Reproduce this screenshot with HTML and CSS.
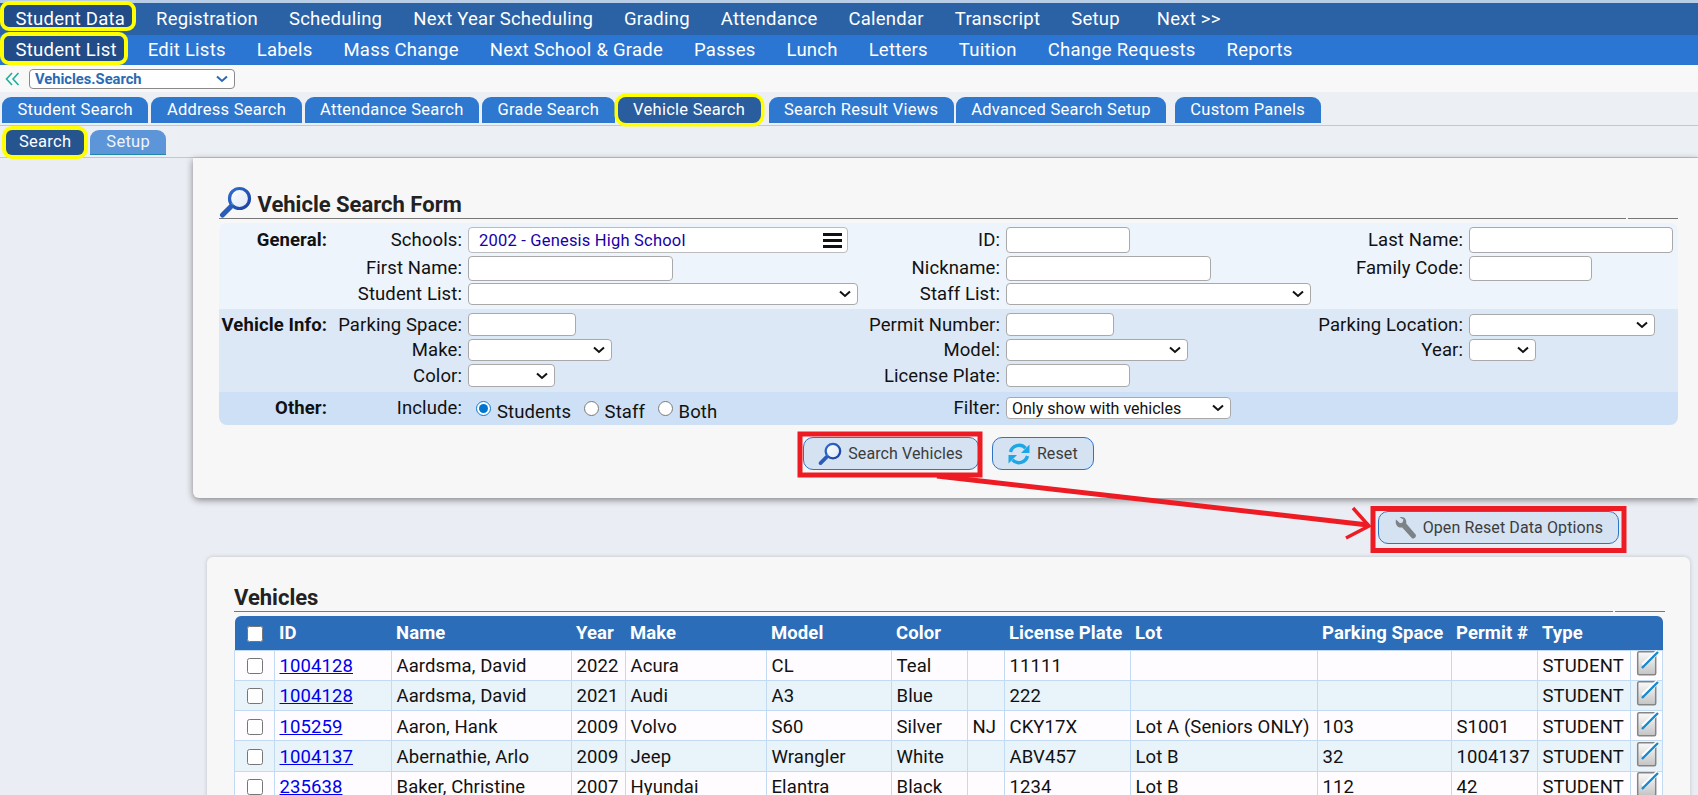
FILE: index.html
```html
<!DOCTYPE html>
<html lang="en">
<head>
<meta charset="utf-8">
<title>Vehicle Search</title>
<link rel="stylesheet" href="styles.css">
</head>
<body>
<svg class="defs" width="0" height="0" aria-hidden="true">
  <defs>
    <linearGradient id="lens" x1="0" y1="0" x2="1" y2="1"><stop offset="0" stop-color="#ffffff"/><stop offset="1" stop-color="#dbe6f5"/></linearGradient>
    <linearGradient id="ring" x1="0" y1="0" x2="1" y2="1"><stop offset="0" stop-color="#2f6fd0"/><stop offset="1" stop-color="#1a3fa0"/></linearGradient>
    <linearGradient id="page" x1="0" y1="0" x2="0" y2="1"><stop offset="0" stop-color="#fbfbfb"/><stop offset="1" stop-color="#c4c4c4"/></linearGradient>
    <symbol id="mag" viewBox="0 0 33 33">
      <circle cx="20.5" cy="12.5" r="10" fill="url(#lens)" stroke="url(#ring)" stroke-width="3.2"/>
      <path d="M13.6 20 L11.6 18" stroke="#37b5dc" stroke-width="4"/>
      <path d="M12 20.5 L3.5 29" stroke="#2a5cb8" stroke-width="5" stroke-linecap="round"/>
    </symbol>
    <symbol id="edit" viewBox="0 0 24 26">
      <rect x="2.700" y="1.700" width="18" height="23" rx="1.500" fill="url(#page)" stroke="#858585" stroke-width="1.500"/>
      <path d="M8 15.500 L23 1.500" stroke="#ffffff" stroke-width="4.500"/>
      <path d="M7 18 L23 2" stroke="#1689cf" stroke-width="2.400"/>
    </symbol>
  </defs>
</svg>

<nav class="nav nav-main">
  <a class="nav-item is-active">Student Data</a>
  <a class="nav-item">Registration</a>
  <a class="nav-item">Scheduling</a>
  <a class="nav-item">Next Year Scheduling</a>
  <a class="nav-item">Grading</a>
  <a class="nav-item">Attendance</a>
  <a class="nav-item">Calendar</a>
  <a class="nav-item">Transcript</a>
  <a class="nav-item">Setup</a>
  <a class="nav-item nav-next">Next &gt;&gt;</a>
</nav>
<nav class="nav nav-sub">
  <a class="nav-item is-active">Student List</a>
  <a class="nav-item">Edit Lists</a>
  <a class="nav-item">Labels</a>
  <a class="nav-item">Mass Change</a>
  <a class="nav-item">Next School &amp; Grade</a>
  <a class="nav-item">Passes</a>
  <a class="nav-item">Lunch</a>
  <a class="nav-item">Letters</a>
  <a class="nav-item">Tuition</a>
  <a class="nav-item">Change Requests</a>
  <a class="nav-item">Reports</a>
</nav>

<div class="screen-bar">
  <svg class="collapse" width="15" height="14" viewBox="0 0 15 14"><path d="M7 1 L1.5 7 L7 13 M13.5 1 L8 7 L13.5 13" fill="none" stroke="#1fae9c" stroke-width="1.6"/></svg>
  <select class="screen-select"><option>Vehicles.Search</option></select>
</div>

<div class="tabs">
  <a class="tab">Student Search</a>
  <a class="tab">Address Search</a>
  <a class="tab">Attendance Search</a>
  <a class="tab">Grade Search</a>
  <a class="tab is-active">Vehicle Search</a>
  <a class="tab">Search Result Views</a>
  <a class="tab tab-tight">Advanced Search Setup</a>
  <a class="tab tab-last">Custom Panels</a>
</div>
<div class="subtabs">
  <a class="subtab is-active">Search</a>
  <a class="subtab">Setup</a>
</div>

<main class="content">
  <section class="panel panel-form">
    <h2 class="heading heading-form">
      <svg class="heading-icon"><use href="#mag"/></svg>
      <span>Vehicle Search Form</span>
    </h2>
    <form class="form">
      <div class="band band-general">
        <div class="group">General:</div>
        <label class="lbl">Schools:</label>
        <div class="multi"><span class="multi-text">2002 - Genesis High School</span><span class="burger"><i></i><i></i><i></i></span></div>
        <label class="lbl">ID:</label>
        <input class="f w124" type="text">
        <label class="lbl">Last Name:</label>
        <input class="f w204" type="text">

        <div></div>
        <label class="lbl">First Name:</label>
        <input class="f w205" type="text">
        <label class="lbl">Nickname:</label>
        <input class="f w205" type="text">
        <label class="lbl">Family Code:</label>
        <input class="f w123" type="text">

        <div></div>
        <label class="lbl">Student List:</label>
        <select class="f w390"></select>
        <label class="lbl">Staff List:</label>
        <select class="f w305"></select>
      </div>
      <div class="band band-vehicle">
        <div class="group">Vehicle Info:</div>
        <label class="lbl">Parking Space:</label>
        <input class="f w108" type="text">
        <label class="lbl">Permit Number:</label>
        <input class="f w108" type="text">
        <label class="lbl">Parking Location:</label>
        <select class="f w186 f-low"></select>

        <div></div>
        <label class="lbl">Make:</label>
        <select class="f w144"></select>
        <label class="lbl">Model:</label>
        <select class="f w182"></select>
        <label class="lbl">Year:</label>
        <select class="f w67"></select>

        <div></div>
        <label class="lbl">Color:</label>
        <select class="f w87"></select>
        <label class="lbl">License Plate:</label>
        <input class="f w124" type="text">
      </div>
      <div class="band band-other">
        <div class="group">Other:</div>
        <label class="lbl">Include:</label>
        <div class="radios">
          <input class="radio" type="radio" name="inc" checked><span class="radio-text">Students</span>
          <input class="radio" type="radio" name="inc"><span class="radio-text">Staff</span>
          <input class="radio" type="radio" name="inc"><span class="radio-text">Both</span>
        </div>
        <label class="lbl">Filter:</label>
        <select class="f w225 f-text"><option>Only show with vehicles</option></select>
      </div>
    </form>
    <div class="actions">
      <button class="btn" type="button"><svg class="btn-icon"><use href="#mag"/></svg>Search Vehicles</button>
      <button class="btn" type="button">
        <svg class="btn-icon" viewBox="0 0 24 24"><path d="M3.5 10 A8.8 8.8 0 0 1 18.5 6.2" fill="none" stroke="#1fa6e4" stroke-width="3.4"/><path d="M22.5 2.5 V11 H14z" fill="#1fa6e4"/><path d="M20.5 14 A8.8 8.8 0 0 1 5.5 17.8" fill="none" stroke="#1fa6e4" stroke-width="3.4"/><path d="M1.5 21.5 V13 H10z" fill="#1fa6e4"/></svg>
        Reset
      </button>
    </div>
  </section>

  <div class="reset-row">
    <button class="btn" type="button">
      <svg class="btn-icon" viewBox="0 0 24 24"><path d="M3 3.5 L7 7.2 L9.6 6.4 L10.4 3.6 L6.6 1.2 C11 0 14 3.2 13.2 7.4 L22.6 18.6 C24 20.4 21 23.8 19 22.2 L9.2 11.4 C5 12.4 1.6 8.6 3 3.5z" fill="#7d8287"/></svg>
      Open Reset Data Options
    </button>
  </div>

  <section class="panel panel-table">
    <h2 class="heading heading-table"><span>Vehicles</span></h2>
    <table class="grid">
      <colgroup>
        <col class="c-check"><col class="c-id"><col class="c-name"><col class="c-year"><col class="c-make"><col class="c-model"><col class="c-color"><col class="c-state"><col class="c-plate"><col class="c-lot"><col class="c-space"><col class="c-permit"><col class="c-type"><col class="c-edit">
      </colgroup>
      <thead>
        <tr><th class="cc"><input class="check" type="checkbox"></th><th>ID</th><th>Name</th><th>Year</th><th>Make</th><th>Model</th><th>Color</th><th></th><th>License Plate</th><th>Lot</th><th>Parking Space</th><th>Permit #</th><th>Type</th><th></th></tr>
      </thead>
      <tbody>
        <tr><td class="cc"><input class="check" type="checkbox"></td><td><a href="#">1004128</a></td><td>Aardsma, David</td><td>2022</td><td>Acura</td><td>CL</td><td>Teal</td><td></td><td>11111</td><td></td><td></td><td></td><td>STUDENT</td><td class="cc"><svg class="edit"><use href="#edit"/></svg></td></tr>
        <tr><td class="cc"><input class="check" type="checkbox"></td><td><a href="#">1004128</a></td><td>Aardsma, David</td><td>2021</td><td>Audi</td><td>A3</td><td>Blue</td><td></td><td>222</td><td></td><td></td><td></td><td>STUDENT</td><td class="cc"><svg class="edit"><use href="#edit"/></svg></td></tr>
        <tr><td class="cc"><input class="check" type="checkbox"></td><td><a href="#">105259</a></td><td>Aaron, Hank</td><td>2009</td><td>Volvo</td><td>S60</td><td>Silver</td><td>NJ</td><td>CKY17X</td><td>Lot A (Seniors ONLY)</td><td>103</td><td>S1001</td><td>STUDENT</td><td class="cc"><svg class="edit"><use href="#edit"/></svg></td></tr>
        <tr><td class="cc"><input class="check" type="checkbox"></td><td><a href="#">1004137</a></td><td>Abernathie, Arlo</td><td>2009</td><td>Jeep</td><td>Wrangler</td><td>White</td><td></td><td>ABV457</td><td>Lot B</td><td>32</td><td>1004137</td><td>STUDENT</td><td class="cc"><svg class="edit"><use href="#edit"/></svg></td></tr>
        <tr><td class="cc"><input class="check" type="checkbox"></td><td><a href="#">235638</a></td><td>Baker, Christine</td><td>2007</td><td>Hyundai</td><td>Elantra</td><td>Black</td><td></td><td>1234</td><td>Lot B</td><td>112</td><td>42</td><td>STUDENT</td><td class="cc"><svg class="edit"><use href="#edit"/></svg></td></tr>
      </tbody>
    </table>
  </section>
</main>

<svg class="annotations" viewBox="0 0 1698 795" aria-hidden="true">
  <rect x="800" y="434" width="180" height="41" fill="none" stroke="#ed1c24" stroke-width="5"/>
  <rect x="1373" y="508.500" width="251" height="42" fill="none" stroke="#ed1c24" stroke-width="5"/>
  <path d="M937 476 L1368 525" fill="none" stroke="#ed1c24" stroke-width="5"/>
  <path d="M1353 508 L1369 526 L1346 538" fill="none" stroke="#ed1c24" stroke-width="3.500"/>
</svg>
</body>
</html>
```

FILE: styles.css
```css
* { box-sizing: border-box; }
html, body { height: 100%; overflow: hidden; }
body {
  margin: 0;
  position: relative;
  background: #eaedf3;
  color: #111;
  font-family: Roboto, "Liberation Sans", sans-serif;
  font-size: 16px;
}
.defs { position: absolute; }

.nav { display: flex; align-items: center; isolation: isolate; }
.nav-main { height: 35px; border-top: 3px solid #b7cde8; background: #2a62a5; }
.nav-sub { height: 30px; background: #2b76d2; }
.nav-item {
  position: relative;
  padding: 0 15.500px;
  color: #fff;
  font-size: 18.500px;
  letter-spacing: .24px;
  line-height: 30px;
  white-space: nowrap;
}
.nav-next { margin-left: 6px; }
.nav-item.is-active::before {
  content: "";
  position: absolute;
  z-index: -1;
  inset: -3px 4px 0 0;
  border: 4px solid #ffff00;
  border-radius: 9px;
  background: #214c88;
}
.nav-main .nav-item.is-active::before { right: 5px; bottom: 3px; }

.screen-bar {
  display: flex;
  align-items: center;
  gap: 9px;
  height: 27px;
  padding-left: 5px;
  background: #f8f8f8;
}
.screen-select {
  appearance: none;
  width: 206px;
  height: 20px;
  padding: 0 0 0 5px;
  border: 1px solid #8a8a8a;
  border-radius: 4px;
  background: #fff url("data:image/svg+xml,%3Csvg xmlns='http://www.w3.org/2000/svg' width='12' height='8'%3E%3Cpath d='M1 1.500l5 4.500 5-4.500' fill='none' stroke='%232a6ab5' stroke-width='2'/%3E%3C/svg%3E") no-repeat right 6px center;
  color: #2a6ab5;
  font: 700 14.700px Roboto, sans-serif;
}

.tabs {
  display: flex;
  gap: 3px;
  height: 34px;
  padding: 5px 0 0 2px;
  border-bottom: 1px solid #c4c8cc;
  background: #eceff4;
}
.tab {
  height: 26px;
  padding: 0 15.500px;
  border-radius: 9px 9px 0 0;
  background: #2f78d0;
  color: #fff;
  font-size: 16.500px;
  letter-spacing: .27px;
  line-height: 26px;
  white-space: nowrap;
}
.tab.is-active {
  margin: 0 5px 0 0;
  border-radius: 8px;
  background: #2a5d9e;
  box-shadow: 0 0 0 3.500px #ffff00;
}
.tab-tight { margin-left: -1px; }
.tab-last { margin-left: 5.500px; }

.subtabs {
  display: flex;
  gap: 6px;
  height: 32px;
  padding: 4px 0 0 6px;
  border-bottom: 1px solid #c4c8cc;
  background: #eceff4;
}
.subtab {
  height: 25px;
  padding: 0 16px;
  border-radius: 9px 9px 0 0;
  border-bottom: 1px solid #1d87ad;
  background: #5c96d8;
  color: #eef4fb;
  font-size: 16.500px;
  letter-spacing: .27px;
  line-height: 24px;
}
.subtab.is-active {
  padding: 0 13px;
  border: 0;
  border-radius: 6px;
  background: #25548f;
  color: #fff;
  box-shadow: 0 0 0 4px #ffff00;
}

.panel { background: #f7f7f7; }
.panel-form {
  height: 340px;
  margin-left: 193px;
  padding: 32px 20px 0 26px;
  border-radius: 0 0 0 6px;
  box-shadow: 0 2px 7px rgba(0, 0, 0, .45);
}
.heading {
  display: flex;
  align-items: flex-end;
  margin: 0;
  border-bottom: 1px solid #777;
  color: #222;
  font-weight: 700;
}
.heading-form { height: 29px; font-size: 22px; line-height: 27px; position: relative; }
.heading-icon { width: 33px; height: 33px; margin: 0 5.500px -1px 0; flex: none; }
.heading::after {
  content: "";
  position: absolute;
  right: 50px;
  bottom: -1px;
  width: 2px;
  height: 1px;
  background: #f7f7f7;
}
.heading-table { position: relative; height: 28px; margin-left: 27px; margin-right: 25px; font-size: 22px; line-height: 27px; }

.form { margin-top: 4px; border-radius: 0 0 8px 8px; }
.band {
  display: grid;
  grid-template-columns: 108px 141px 392px 146px 305px 158px 1fr;
  align-items: center;
}
.band-general { padding: 4px 0; row-gap: 2.500px; grid-template-rows: 26px 25px 22px; background: #edf4fc; border-radius: 8px 8px 0 0; }
.band-vehicle { padding: 4px 0 5px; row-gap: 3px; grid-template-rows: 23px 22px 23px; background: #dde8f6; }
.band-other { padding: 5px 0 6px; grid-template-rows: 22px; background: #cee0f5; border-radius: 0 0 8px 8px; }
.group { font-weight: 700; font-size: 18.500px; letter-spacing: .1px; text-align: right; white-space: nowrap; }
.lbl { padding-right: 6px; font-size: 18.500px; letter-spacing: .1px; line-height: 22px; text-align: right; white-space: nowrap; }
.f {
  display: block;
  height: 100%;
  padding: 0 2px;
  border: 1px solid #a9a9a9;
  border-radius: 4px;
  background-color: #fff;
}
select.f {
  appearance: none;
  background: #fff url("data:image/svg+xml,%3Csvg xmlns='http://www.w3.org/2000/svg' width='12' height='8'%3E%3Cpath d='M1 1.500l5 4.500 5-4.500' fill='none' stroke='%23111' stroke-width='2'/%3E%3C/svg%3E") no-repeat right 6px center;
}
.f-low { height: 22px; margin-top: 1px; }
select.f-text { padding-left: 5px; color: #111; font: 16px Roboto, sans-serif; }
.w67 { width: 67px; } .w87 { width: 87px; } .w108 { width: 108px; }
.w123 { width: 123px; } .w124 { width: 124px; } .w144 { width: 144px; }
.w182 { width: 182px; } .w186 { width: 186px; } .w204 { width: 204px; } .w205 { width: 205px; }
.w225 { width: 225px; } .w305 { width: 305px; } .w390 { width: 390px; }

.multi {
  display: flex;
  align-items: center;
  justify-content: space-between;
  width: 380px;
  height: 100%;
  padding: 0 5px 0 10px;
  border: 1px solid #bbb;
  border-radius: 4px;
  background: #fff;
}
.multi-text { color: #1a00a8; font-size: 16.500px; letter-spacing: .2px; }
.burger { display: flex; flex-direction: column; gap: 3px; width: 19px; }
.burger i { display: block; height: 3px; background: #111; }

.radios { display: flex; align-items: center; font-size: 18.500px; letter-spacing: .1px; }
.radio { width: 15px; height: 15px; margin: 0 6px 0 8px; accent-color: #0075d0; }
.radio-text { position: relative; top: 4px; margin-right: 4.500px; }

.actions { display: flex; justify-content: center; gap: 13px; margin-top: 12px; }
.btn {
  display: flex;
  align-items: center;
  gap: 6px;
  height: 33px;
  padding: 0 15px 0 14px;
  border: 1px solid #2f74c4;
  border-radius: 10px;
  background: #d4e2f2;
  color: #3c3c3c;
  font: 16px Roboto, sans-serif;
  letter-spacing: .1px;
}
.btn-icon { width: 24px; height: 24px; flex: none; }

.reset-row { display: flex; justify-content: flex-end; height: 59px; padding: 13px 79px 0 0; }
.panel-table {
  height: 260px;
  margin: 0 8px 0 207px;
  padding-top: 27px;
  border-radius: 6px 6px 0 0;
  box-shadow: 0 0 4px rgba(0, 0, 0, .18);
}
.grid { width: 1428px; margin: 4px 0 0 27px; border-collapse: collapse; table-layout: fixed; font-size: 18.500px; letter-spacing: .1px; }
.c-check { width: 40px; } .c-id { width: 117px; } .c-name { width: 180px; } .c-year { width: 54px; }
.c-make { width: 141px; } .c-model { width: 125px; } .c-color { width: 76px; } .c-state { width: 37px; }
.c-plate { width: 126px; } .c-lot { width: 187px; } .c-space { width: 134px; } .c-permit { width: 86px; }
.c-type { width: 93px; } .c-edit { width: 32px; }
.grid th {
  height: 34px;
  padding: 0 4.500px;
  background: #2c6dba;
  color: #fff;
  font-weight: 700;
  text-align: left;
  white-space: nowrap;
}
.grid th:first-child { border-radius: 6px 0 0 0; }
.grid th:last-child { border-radius: 0 6px 0 0; }
.grid td {
  height: 30.250px;
  padding: 2px 4.500px 0;
  border: 1px solid #c2daf2;
  white-space: nowrap;
}
.grid tbody tr:nth-child(odd) td { background: #fffcff; }
.grid tbody tr:nth-child(even) td { background: #e8f3fa; }
.grid a { color: #0000ee; }
.grid .cc { padding: 0; text-align: center; }
.check { display: inline-block; width: 16px; height: 16px; margin: 0; vertical-align: middle; }
.edit { display: block; width: 24px; height: 26px; margin: -1px auto 3px; }

.annotations { position: absolute; left: 0; top: 0; width: 1698px; height: 795px; pointer-events: none; }
```
